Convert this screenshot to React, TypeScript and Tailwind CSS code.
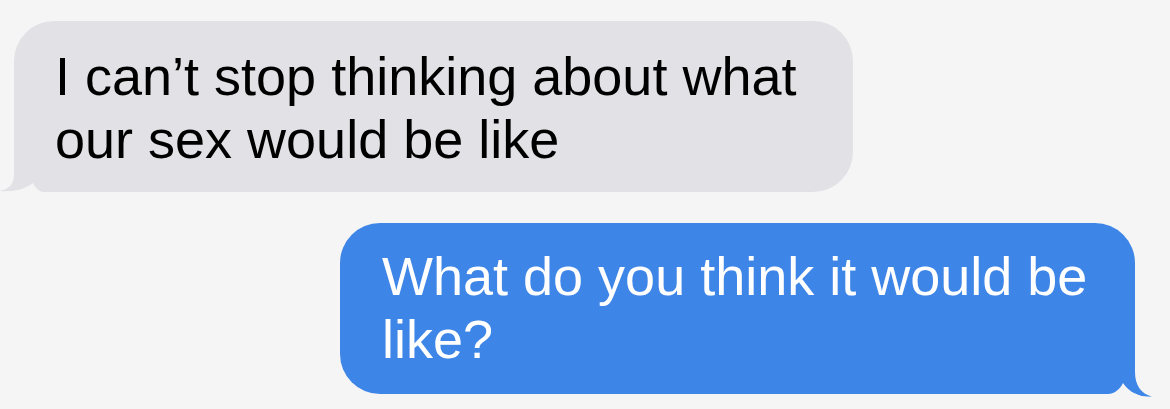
import React from "react";

const BG = "#f5f5f5";
const GRAY = "#e2e2e6";
const BLUE = "#3e85e8";

function LeftTail() {
  return (
    <svg
      className="absolute left-[-20px] bottom-[-4px]"
      width="50"
      height="40"
      viewBox="0 0 50 40"
    >
      <path d="M39 0 L20 0 L20 19 C20 29 14 33.5 5 35 C15 36.5 30 34.5 39 27 Z" fill={GRAY} />
      <path d="M50 36 L49 36 C44 35 41 31.5 39 27 C30 34.5 15 36.5 5 35 L0 35 L0 40 L50 40 Z" fill={BG} />
    </svg>
  );
}

function RightTail() {
  return (
    <svg
      className="absolute right-[-20px] bottom-[-4px]"
      width="50"
      height="40"
      viewBox="0 0 50 40"
    >
      <path d="M18 0 L30 0 L30 14 C30 27 36 36 47 38.5 C37 40 25 35.5 18 25 Z" fill={BLUE} />
      <path d="M0 36 L3 36 C10 35.5 15 31 18 25 C25 35.5 37 40 47 38.5 L50 38.5 L50 40 L0 40 Z" fill={BG} />
    </svg>
  );
}

export default function App() {
  return (
    <div
      className="w-[1170px] h-[409px] bg-[#f5f5f5] flex flex-col pt-[21px] overflow-hidden"
      style={{ fontFamily: '"Liberation Sans", Arial, sans-serif' }}
    >
      <div className="relative ml-[14px] w-[839px] h-[171px] bg-[#e2e2e6] rounded-[40px] rounded-bl-none pl-[41px] pt-[24px] text-[54px] leading-[63px] text-black">
        I can’t stop thinking about what
        <br />
        our sex would be like
        <LeftTail />
      </div>
      <div className="relative self-end mr-[35px] mt-[31px] w-[795px] h-[171px] bg-[#3e85e8] rounded-[40px] rounded-br-none pl-[42px] pt-[22px] text-[54px] leading-[63px] text-white">
        What do you think it would be
        <br />
        like?
        <RightTail />
      </div>
    </div>
  );
}
